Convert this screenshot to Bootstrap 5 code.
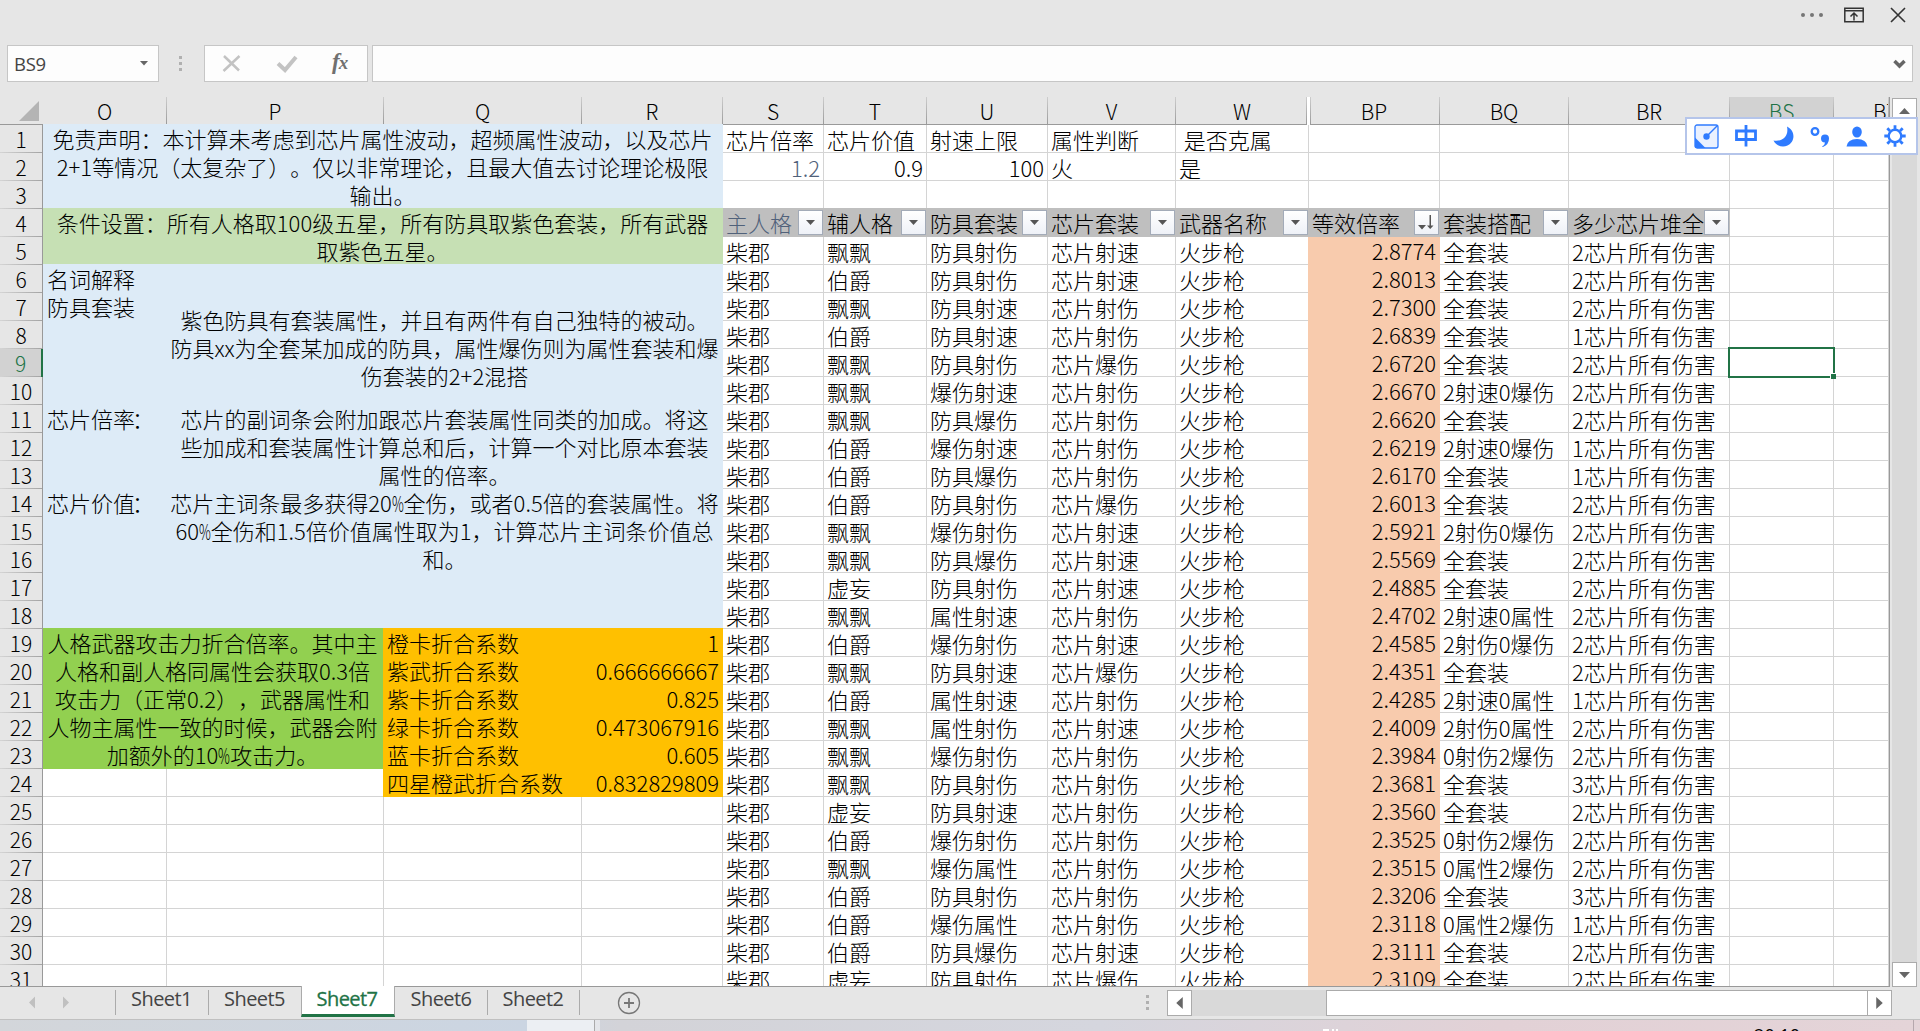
<!DOCTYPE html>
<html lang="zh-CN">

<head>
    <meta charset="UTF-8">
    <meta name="viewport" content="width=device-width, initial-scale=1.0">
    <link rel="stylesheet" href="https://cdn.jsdelivr.net/npm/bootstrap@5.3.3/dist/css/bootstrap.min.css">
    <script src="https://cdn.jsdelivr.net/npm/bootstrap@5.3.3/dist/js/bootstrap.bundle.min.js"></script>
    <title>Sheet7</title>
    <style>
        body { background: #e6e6e6; height: 1031px; color: #000; font-family: "Open Sans", "Noto Sans CJK SC", sans-serif; }
        svg { display: block; flex: none; }

        .titlebar { height: 45px; padding: 5px 13px 0 0; }
        .formula-row { height: 37px; padding: 0 7px; }
        .field { background: #fdfdfd; border: 1px solid #c6c6c6; height: 37px; }
        .name-box { width: 152px; font-size: 18.5px; color: #444; padding: 0 10px 0 6px; letter-spacing: -.3px; }
        .fx-box { width: 164px; margin-left: 21px; }
        .input-box { margin-left: 4px; padding-right: 6px; }
        .grip { margin-left: 20px; }

        .sheet-area { height: 890px; margin-top: 15px; }
        .sheet {
            width: 1890px; overflow: hidden; background: #fff; border-bottom: 1px solid #999; border-right: 1px solid #999;
            grid-template-columns: 43px 124px 217px 198px 141px 101px 103px 121px 128px 133px 131px 129px 161px 104px 55px;
            grid-template-rows: 28px repeat(31, 28px);
            font: 300 22px/28px "Noto Sans CJK SC", sans-serif;
            font-kerning: none; text-spacing-trim: space-all;
        }
        .sheet > div { white-space: nowrap; }
        .cell { border-right: 1px solid #d4d4d4; border-bottom: 1px solid #d4d4d4; padding: 0 3px; line-height: 28px; }
        .num { text-align: right; }
        .col-head, .row-head, .corner { background: #e6e6e6; text-align: center; font-size: 21px; }
        .col-head, .corner { border-bottom: 1px solid #999; line-height: 29px; }
        .col-head { border-right: 1px solid; border-image: linear-gradient(#cfcfcf, #999) 1; }
        .row-head { border-right: 1px solid #999; line-height: 29px; background: linear-gradient(90deg, #d4d4d4, #a4a4a4) bottom / 100% 1px no-repeat #e6e6e6; }
        .col-head.active { background: #d2d2d2; color: #217346; }
        .row-head.active { background-color: #d2d2d2; color: #217346; border-right: 2px solid #217346; }
        .cut { text-align: left; padding-left: 39px; overflow: hidden; }
        .gap-before { border-left: 1px solid #999; margin-left: 1px; padding-right: 2px; }
        .gap-after { margin-right: 2px; padding-left: 2px; }

        /* fills paint over the grid line above and to the left */
        .fill { margin: -1px 0 0 -1px; z-index: 1; padding: 0 4px 0 4px; line-height: 29px; }
        .merged { display: flex; align-items: center; justify-content: center; text-align: center; line-height: 28px; padding-bottom: 2px; }
        .blue { background: #ddebf7; margin-left: 0; }
        .note { padding: 0 3px 2px 2px; }
        .blue-in { z-index: 2; padding: 0 0 1px; }
        .blue-in.higher { padding-bottom: 4px; }
        .leaf { background: #c6e0b4; margin-left: 0; padding-bottom: 1px; }
        .green { background: #92d050; margin-left: 0; padding: 0 3px 2px 1px; }
        .gold { background: #ffc000; }
        .peach { background: #f8cbad; }
        .silver { background: #bfbfbf; }
        .muted-ink { color: #50617a; }
        .pct { display: inline-block; transform: scaleX(.6); margin: 0 -4px; }
        .colon { margin-left: -3px; }

        .filter { z-index: 3; justify-self: end; width: 25px; height: 25px; margin: 1px 1px 0 0; border: 1px solid #a3abb8; background: linear-gradient(#fff, #eef1f7); }
        .selection { z-index: 4; margin: -2px -1px -1px -2px; border: 2px solid #217346; position: relative; }
        .selection::after { content: ""; position: absolute; right: -3px; bottom: -3px; width: 6px; height: 6px; background: #217346; border: 1px solid #fff; border-right: 0; border-bottom: 0; }

        .vscroll { width: 25px; margin-left: 2px; margin-top: 1px; background: #d9d9d9; }
        .sbtn { width: 25px; height: 25px; background: #fff; border: 1px solid #ababab; flex: none; }

        .tabbar { height: 32px; font-size: 20px; letter-spacing: -.55px; color: #444; }
        .tab { height: 30px; line-height: 24px; text-align: center; width: 93px; position: relative; }
        .tab + .tab::before, .tab-first::before { content: ""; position: absolute; left: 0; top: 3px; height: 25px; border-left: 1px solid #ababab; }
        .tab.on { background: #fff; color: #217346; width: 94px; margin-top: -1px; height: 31px; line-height: 26px; padding-right: 2px; border: solid #ababab; border-width: 0 1px; border-bottom: 3px solid #217346; -webkit-text-stroke: .3px; }
        .tab.on ~ .tab { width: 92px; }
        .tab.on::before, .tab.on + .tab::before { display: none; }
        .tabs { margin-left: 45px; }
        .hscroll { width: 725px; height: 26px; margin: 3px 0 0 17px; background: #d9d9d9; }
        .thumb { background: #fff; border: 1px solid #ababab; width: 542px; height: 26px; margin-right: -1px; }

        .taskbar { height: 12px; border-top: 1px solid #c0c0c0; overflow: hidden; background: linear-gradient(90deg, #d3d6da 0, #cbd5e2 527px, #d3d3d8 620px, #d5d6de 1100px, #e2d1d6 1500px, #e4d4d8 100%); }
        .task-item { margin-left: 527px; width: 68px; background: #eceff3; border-right: 1px solid #aaa; }
        .task-edge { width: 5px; background: #e4e6ea; }
        .clock { margin: 3px 113px 0 0; font: 18px/24px "Open Sans", sans-serif; }
        .desk-edge { width: 7px; border-left: 1px solid #b5a8ad; }

        .ime { position: absolute; left: 1685px; top: 117px; width: 233px; height: 38px; z-index: 10; background: #fff; border: 2px solid #b5c5ea; padding: 0 10px 0 7px; }
    </style>
</head>

<body class="d-flex flex-column overflow-hidden">

    <div class="titlebar d-flex justify-content-end">
        <svg width="22" height="20" viewBox="0 0 22 20" fill="#767676"><circle cx="2" cy="10" r="2" /><circle cx="11" cy="10" r="2" /><circle cx="20" cy="10" r="2" /></svg>
        <svg style="margin: 0 25px 0 21px" width="20" height="20" viewBox="0 0 20 20" fill="none" stroke="#333" stroke-width="1.500"><path d="M.8 3.200h18.400v13.600H.8zM.8 5.800h18.400M10 15.500V8.500M6.500 11.500L10 8l3.500 3.500" /></svg>
        <svg width="18" height="20" viewBox="0 0 18 20" fill="none" stroke="#333" stroke-width="1.600"><path d="M2 3l14 14M16 3L2 17" /></svg>
    </div>

    <div class="formula-row d-flex align-items-center">
        <div class="field name-box d-flex align-items-center justify-content-between">
            <span>BS9</span>
            <svg width="8" height="5" viewBox="0 0 8 5" fill="#666"><path d="M0 0h8L4 4.500z" /></svg>
        </div>
        <svg class="grip" width="4" height="16" viewBox="0 0 4 16" fill="#b0b0b0"><path d="M0 0h3v3H0zM0 6h3v3H0zM0 12h3v3H0z" /></svg>
        <div class="field fx-box d-flex align-items-center">
            <svg width="162" height="35" viewBox="0 0 162 35">
                <path d="M19 10L34 24.500M34.500 10L18.500 25" stroke="#c3c3c3" stroke-width="2.500" fill="none" />
                <path d="M73 17.500l7 6.500L91 11" stroke="#c3c3c3" stroke-width="4" fill="none" />
                <text x="127" y="23" font-family="Liberation Serif" font-style="italic" font-weight="bold" font-size="23" fill="#707070">f<tspan dx="-1" font-size="19">x</tspan></text>
            </svg>
        </div>
        <div class="field input-box flex-grow-1 d-flex align-items-center justify-content-end">
            <svg width="13" height="10" viewBox="0 0 13 10" fill="none" stroke="#666" stroke-width="3.500"><path d="M1.500 2l5 5 5-5" /></svg>
        </div>
    </div>

    <div class="sheet-area d-flex">
        <div class="sheet d-grid" id="sheet"></div>
        <div class="vscroll d-flex flex-column justify-content-between">
            <div class="sbtn d-flex align-items-center justify-content-center"><svg width="11" height="6" viewBox="0 0 11 6" fill="#666"><path d="M0 6h11L5.500 0z" /></svg></div>
            <div class="sbtn d-flex align-items-center justify-content-center"><svg width="11" height="6" viewBox="0 0 11 6" fill="#666"><path d="M0 0h11L5.500 6z" /></svg></div>
        </div>
    </div>

    <div class="tabbar d-flex">
        <svg width="70" height="32" viewBox="0 0 70 32" fill="#c0c0c0"><path d="M35 9.500v12L29 15.500zM63 9.500v12l6-6z" /></svg>
        <div class="tabs d-flex">
            <div class="tab tab-first">Sheet1</div>
            <div class="tab">Sheet5</div>
            <div class="tab on">Sheet7</div>
            <div class="tab">Sheet6</div>
            <div class="tab">Sheet2</div>
            <div class="tab">
                <svg class="position-absolute" style="left: 38px; top: 4px" width="24" height="24" viewBox="0 0 24 24" fill="none" stroke="#777"><circle cx="12" cy="12" r="10.500" stroke-width="1.300" /><path d="M12 7v10M7 12h10" stroke-width="1.800" /></svg>
            </div>
        </div>
        <svg class="ms-auto mt-2" width="4" height="16" viewBox="0 0 4 16" fill="#b0b0b0"><path d="M0 0h3v3H0zM0 6h3v3H0zM0 12h3v3H0z" /></svg>
        <div class="hscroll d-flex">
            <div class="sbtn h-100 me-auto d-flex align-items-center justify-content-center"><svg width="7" height="12" viewBox="0 0 6 11" fill="#666"><path d="M6 0v11L0 5.500z" /></svg></div>
            <div class="thumb"></div>
            <div class="sbtn h-100 d-flex align-items-center justify-content-center"><svg width="7" height="12" viewBox="0 0 6 11" fill="#666"><path d="M0 0v11l6-5.500z" /></svg></div>
        </div>
        <div style="width: 28px"></div>
    </div>

    <div class="taskbar d-flex">
        <div class="task-item"></div>
        <div class="task-edge"></div>
        <svg class="ms-auto" style="margin-right: 414px" width="18" height="11" viewBox="0 0 18 11" fill="#fff"><path d="M1 9h6v2H1zM10 9h2v2h-2zM14 9h2v2h-2z" /></svg>
        <div class="clock">20:10</div>
        <div class="desk-edge"></div>
    </div>

    <div class="ime d-flex align-items-center justify-content-between">
        <svg width="25" height="25" viewBox="0 0 25 25"><rect x="1" y="1" width="23" height="23" rx="2" fill="#eaf1ff" stroke="#2f7bff" stroke-width="1.300" /><path d="M1 13.500L11.500 24H2.500Q1 24 1 22.500z" fill="#2f7bff" /><path d="M13 12L23.500 1.500" stroke="#2f7bff" stroke-width="1.500" /><circle cx="12.500" cy="12.500" r="3.200" fill="#2f7bff" /></svg>
        <svg width="22" height="22" viewBox="0 0 22 22" fill="none" stroke="#2f7bff" stroke-width="2.800"><path d="M1.500 6h19v8.500h-19zM11 0v21.500" /></svg>
        <svg width="21" height="21" viewBox="0 0 21 21" fill="#2f7bff"><path d="M14 .5C23 5 22 16 14.500 19.500 9 22 3 19.500.5 14.500 10 16 16 10 14 .5z" /></svg>
        <svg width="20" height="21" viewBox="0 0 20 21"><circle cx="5" cy="5.500" r="3.300" fill="none" stroke="#2f7bff" stroke-width="2.300" /><path d="M12 20.500q3-1.500 3-4a4 4 0 1 1 4-4q0 6-6 8.500z" fill="#2f7bff" /></svg>
        <svg width="22" height="21" viewBox="0 0 22 21" fill="#2f7bff"><ellipse cx="11" cy="6" rx="4.800" ry="5.500" /><path d="M.5 20.500q1-7.500 10.500-7.500t10.500 7.500z" /></svg>
        <svg width="22" height="22" viewBox="-11 -11 22 22" fill="none" stroke="#2f7bff"><circle r="6.300" stroke-width="2.400" /><path d="M0-7v-3.700M0 7v3.700M7 0h3.700M-7 0h-3.700M5-5l2.700-2.700M-5-5l-2.700-2.700M5 5l2.700 2.700M-5 5l-2.700 2.700" stroke-width="2.800" /></svg>
    </div>

    <script>
        const sheet = document.getElementById("sheet")
        const cols = ["O", "P", "Q", "R", "S", "T", "U", "V", "W", "BP", "BQ", "BR", "BS", "BT"]
        let str = ""

        // row is the sheet row number, col is the column letter, span is [rows, cols]
        const put = (row, col, cls, text = "", span = [1, 1]) => {
            const c = cols.indexOf(col) + 2
            str += `<div class="${cls}" style="grid-area:${row + 1}/${c}/span ${span[0]}/span ${span[1]}">${text}</div>`
        }
        const putMerged = (row, col, cls, text, span) => put(row, col, "fill merged " + cls, `<div>${text}</div>`, span)

        // headers
        str += `<div class="corner" style="grid-area:1/1"><svg width="42" height="27" viewBox="0 0 42 27"><path d="M39 4v20H19z" fill="#b4b4b4"/></svg></div>`
        const headClass = { BS: " active", BT: " cut", BP: " gap-before", W: " gap-after" }
        for (let c of cols) put(0, c, "col-head" + (headClass[c] || ""), c)
        for (let r = 1; r <= 31; r++) {
            str += `<div class="row-head ${r == 9 ? "active" : ""}" style="grid-area:${r + 1}/1">${r}</div>`
        }

        const rows = [
            ["飘飘", "防具射伤", "芯片射速", "2.8774", "全套装", 2],
            ["伯爵", "防具射伤", "芯片射速", "2.8013", "全套装", 2],
            ["飘飘", "防具射速", "芯片射伤", "2.7300", "全套装", 2],
            ["伯爵", "防具射速", "芯片射伤", "2.6839", "全套装", 1],
            ["飘飘", "防具射伤", "芯片爆伤", "2.6720", "全套装", 2],
            ["飘飘", "爆伤射速", "芯片射伤", "2.6670", "2射速0爆伤", 2],
            ["飘飘", "防具爆伤", "芯片射伤", "2.6620", "全套装", 2],
            ["伯爵", "爆伤射速", "芯片射伤", "2.6219", "2射速0爆伤", 1],
            ["伯爵", "防具爆伤", "芯片射伤", "2.6170", "全套装", 1],
            ["伯爵", "防具射伤", "芯片爆伤", "2.6013", "全套装", 2],
            ["飘飘", "爆伤射伤", "芯片射速", "2.5921", "2射伤0爆伤", 2],
            ["飘飘", "防具爆伤", "芯片射速", "2.5569", "全套装", 2],
            ["虚妄", "防具射伤", "芯片射速", "2.4885", "全套装", 2],
            ["飘飘", "属性射速", "芯片射伤", "2.4702", "2射速0属性", 2],
            ["伯爵", "爆伤射伤", "芯片射速", "2.4585", "2射伤0爆伤", 2],
            ["飘飘", "防具射速", "芯片爆伤", "2.4351", "全套装", 2],
            ["伯爵", "属性射速", "芯片射伤", "2.4285", "2射速0属性", 1],
            ["飘飘", "属性射伤", "芯片射速", "2.4009", "2射伤0属性", 2],
            ["飘飘", "爆伤射伤", "芯片射伤", "2.3984", "0射伤2爆伤", 2],
            ["飘飘", "防具射伤", "芯片射伤", "2.3681", "全套装", 3],
            ["虚妄", "防具射速", "芯片射伤", "2.3560", "全套装", 2],
            ["伯爵", "爆伤射伤", "芯片射伤", "2.3525", "0射伤2爆伤", 2],
            ["飘飘", "爆伤属性", "芯片射伤", "2.3515", "0属性2爆伤", 2],
            ["伯爵", "防具射伤", "芯片射伤", "2.3206", "全套装", 3],
            ["伯爵", "爆伤属性", "芯片射伤", "2.3118", "0属性2爆伤", 1],
            ["伯爵", "防具爆伤", "芯片射速", "2.3111", "全套装", 2],
            ["虚妄", "防具射伤", "芯片爆伤", "2.3109", "全套装", 2]
        ]
        const values = {
            S1: "芯片倍率", T1: "芯片价值", U1: "射速上限", V1: "属性判断", W1: "&nbsp;是否克属",
            S2: "1.2", T2: "0.9", U2: "100", V2: "火", W2: "是"
        }
        rows.forEach((d, i) => {
            const r = i + 5
            values["S" + r] = "柴郡"
            values["T" + r] = d[0]
            values["U" + r] = d[1]
            values["V" + r] = d[2]
            values["W" + r] = "火步枪"
            values["BQ" + r] = d[4]
            values["BR" + r] = d[5] + "芯片所有伤害"
            put(r, "BP", "fill peach num", d[3])
        })

        // plain cells
        for (let r = 1; r <= 31; r++) {
            for (let c of cols) {
                const v = values[c + r] || ""
                let cls = "cell"
                if (v && !isNaN(v)) cls += " num"
                if (c + r == "S2") cls += " muted-ink"
                put(r, c, cls, v)
            }
        }

        // filter row
        const arrow = `<svg width="23" height="23" viewBox="0 0 23 23" fill="#555"><path d="M7 9h9l-4.500 5z"/></svg>`
        const sorted = `<svg width="23" height="23" viewBox="0 0 23 23" fill="#555"><path d="M3 14h8l-4 4.500zM14.500 4H16v10.500h2.500L15.200 18 12 14.500h2.500z"/></svg>`
        const heads = { S: "主人格", T: "辅人格", U: "防具套装", V: "芯片套装", W: "武器名称", BP: "等效倍率", BQ: "套装搭配", BR: "多少芯片堆全" }
        for (let c in heads) {
            put(4, c, "fill silver" + (c == "S" ? " muted-ink" : ""), heads[c])
            put(4, c, "filter", c == "BP" ? sorted : arrow)
        }

        // notes
        const pct = `<span class="pct">%</span>`
        putMerged(1, "O", "blue note", "免责声明：本计算未考虑到芯片属性波动，超频属性波动，以及芯片<br>2+1等情况（太复杂了）。仅以非常理论，且最大值去讨论理论极限<br>输出。", [3, 4])
        putMerged(4, "O", "leaf note", "条件设置：所有人格取100级五星，所有防具取紫色套装，所有武器<br>取紫色五星。", [2, 4])
        put(6, "O", "fill blue", "", [13, 4])
        const colon = `<span class="colon">：</span>`
        const terms = { 6: "名词解释", 7: "防具套装", 11: "芯片倍率" + colon, 14: "芯片价值" + colon }
        for (let r in terms) put(+r, "O", "fill blue", terms[r])
        putMerged(7, "P", "blue-in higher", "紫色防具有套装属性，并且有两件有自己独特的被动。<br>防具xx为全套某加成的防具，属性爆伤则为属性套装和爆<br>伤套装的2+2混搭", [4, 3])
        putMerged(11, "P", "blue-in", "芯片的副词条会附加跟芯片套装属性同类的加成。将这<br>些加成和套装属性计算总和后，计算一个对比原本套装<br>属性的倍率。", [3, 3])
        putMerged(14, "P", "blue-in", `芯片主词条最多获得20${pct}全伤，或者0.5倍的套装属性。将<br>60${pct}全伤和1.5倍价值属性取为1，计算芯片主词条价值总<br>和。`, [3, 3])
        putMerged(19, "O", "green", `人格武器攻击力折合倍率。其中主<br>人格和副人格同属性会获取0.3倍<br>攻击力（正常0.2），武器属性和<br>人物主属性一致的时候，武器会附<br>加额外的10${pct}攻击力。`, [5, 2])

        const factors = [["橙卡折合系数", "1"], ["紫武折合系数", "0.666666667"], ["紫卡折合系数", "0.825"], ["绿卡折合系数", "0.473067916"], ["蓝卡折合系数", "0.605"], ["四星橙武折合系数", "0.832829809"]]
        factors.forEach((f, i) => {
            put(19 + i, "Q", "fill gold", f[0])
            put(19 + i, "R", "fill gold num", f[1])
        })

        put(9, "BS", "selection")
        sheet.innerHTML = str
    </script>
</body>

</html>
